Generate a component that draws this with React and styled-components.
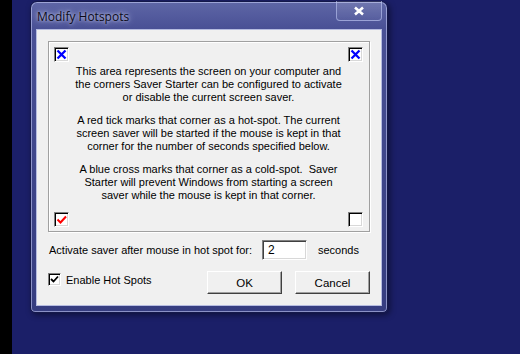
import styled, { createGlobalStyle } from "styled-components";

const Global = createGlobalStyle`
  *, *::before, *::after {
    box-sizing: border-box;
  }
  html, body {
    margin: 0;
    padding: 0;
    width: 520px;
    height: 354px;
    overflow: hidden;
  }
  body {
    font-family: "Liberation Sans", Arial, sans-serif;
  }
`;

function Check({ mark, size = 15 }) {
  return (
    <Box $size={size}>
      {mark === "cross" && (
        <svg width="11" height="11" viewBox="0 0 11 11">
          <path d="M1.5 1.5 L9.5 9.5 M9.5 1.5 L1.5 9.5" stroke="#0000ff" strokeWidth="2.3" />
        </svg>
      )}
      {mark === "tick" && (
        <svg width="11" height="11" viewBox="0 0 11 11">
          <path d="M1.5 5.5 L4.5 8.5 L10 2.5" stroke="#ff0000" strokeWidth="2" fill="none" />
        </svg>
      )}
      {mark === "black" && (
        <svg width="9" height="9" viewBox="0 0 9 9">
          <path d="M1 4 L3.5 6.5 L8 1.5" stroke="#000" strokeWidth="1.8" fill="none" />
        </svg>
      )}
    </Box>
  );
}

function App() {
  return (
    <>
      <Global />
      <Desktop>
        <Strip />
        <Screen>
          <Window>
            <TitleBar>
              <Title>Modify Hotspots</Title>
              <CloseBtn>
                <svg width="12" height="10" viewBox="0 0 12 10">
                  <path d="M2 1.5 L10 8.5 M10 1.5 L2 8.5" stroke="#fff" strokeWidth="2.6" />
                </svg>
              </CloseBtn>
            </TitleBar>
            <Client>
              <Group>
                <CornerRow>
                  <Check mark="cross" />
                  <Check mark="cross" />
                </CornerRow>
                <Text>
                  <p>
                    This area represents the screen on your computer and
                    <br />
                    the corners Saver Starter can be configured to activate
                    <br />
                    or disable the current screen saver.
                  </p>
                  <p>
                    A red tick marks that corner as a hot-spot. The current
                    <br />
                    screen saver will be started if the mouse is kept in that
                    <br />
                    corner for the number of seconds specified below.
                  </p>
                  <p>
                    A blue cross marks that corner as a cold-spot.&nbsp; Saver
                    <br />
                    Starter will prevent Windows from starting a screen
                    <br />
                    saver while the mouse is kept in that corner.
                  </p>
                </Text>
                <CornerRow>
                  <Check mark="tick" />
                  <Check />
                </CornerRow>
              </Group>
              <DelayRow>
                <span>Activate saver after mouse in hot spot for:</span>
                <Field>2</Field>
                <Unit>seconds</Unit>
              </DelayRow>
              <BottomRow>
                <Enable>
                  <Check mark="black" size={13} />
                  <span>Enable Hot Spots</span>
                </Enable>
                <Buttons>
                  <Button>OK</Button>
                  <Button>Cancel</Button>
                </Buttons>
              </BottomRow>
            </Client>
          </Window>
        </Screen>
      </Desktop>
    </>
  );
}

export default App;

const Desktop = styled.div`
  display: flex;
  width: 520px;
  height: 354px;
`;

const Strip = styled.div`
  width: 12px;
  background: #000;
`;

const Screen = styled.div`
  position: relative;
  flex: 1;
  background: #1b1f68;
`;

const Window = styled.div`
  position: absolute;
  left: 18px;
  top: 1px;
  width: 358px;
  height: 312px;
  border: 1px solid #14184a;
  border-radius: 7px 7px 5px 5px;
  background: linear-gradient(180deg, #5e66a6 0px, #4a5196 26px, #3d4488 60%, #363d80 100%);
  box-shadow: inset 0 0 0 1px rgba(210, 215, 255, 0.55), 2px 2px 6px rgba(0, 0, 0, 0.45);
  display: flex;
  flex-direction: column;
  padding: 0 5px 6px 5px;
`;

const TitleBar = styled.div`
  position: relative;
  height: 27px;
  flex: none;
  display: flex;
  align-items: center;
`;

const Title = styled.div`
  font-family: "Open Sans", "Noto Sans", sans-serif;
  font-size: 12px;
  color: #0c0a18;
  padding-left: 1px;
  margin-top: 2px;
  text-shadow: 0 0 6px rgba(220, 225, 255, 0.9), 0 0 3px rgba(220, 225, 255, 0.7);
`;

const CloseBtn = styled.div`
  position: absolute;
  right: 0;
  top: -1px;
  width: 46px;
  height: 20px;
  border: 1px solid rgba(190, 200, 245, 0.6);
  border-top: none;
  border-radius: 0 0 4px 4px;
  background: linear-gradient(180deg, rgba(255, 255, 255, 0.12), rgba(255, 255, 255, 0.04));
  display: flex;
  align-items: center;
  justify-content: center;
`;

const Client = styled.div`
  flex: 1;
  background: #f0f0f0;
  border: 1px solid #b6bce0;
  padding: 11px 11px 0 11px;
  font-size: 11px;
  color: #000;
`;

const Group = styled.div`
  height: 191px;
  border: 1px solid #a0a0a0;
  box-shadow: inset 1px 1px 0 #fff, 1px 1px 0 #fff;
  padding: 5px 6px 6px 5px;
  display: flex;
  flex-direction: column;
`;

const CornerRow = styled.div`
  display: flex;
  justify-content: space-between;
`;

const Text = styled.div`
  flex: 1;
  text-align: center;
  line-height: 13px;
  padding-top: 3px;

  p {
    margin: 0 0 10px 0;
  }
`;

const Box = styled.div`
  width: ${(p) => p.$size}px;
  height: ${(p) => p.$size}px;
  background: #fff;
  border: 1px solid;
  border-color: #808080 #fff #fff #808080;
  box-shadow: inset 1px 1px 0 #000, inset -1px -1px 0 #d8d8d8;
  display: flex;
  align-items: center;
  justify-content: center;
`;

const DelayRow = styled.div`
  display: flex;
  align-items: center;
  margin-top: 8px;
  padding-left: 1px;
`;

const Unit = styled.span`
  margin-left: 11px;
`;

const Field = styled.div`
  width: 45px;
  height: 20px;
  margin-left: 10px;
  background: #fff;
  border: 1px solid;
  border-color: #808080 #fff #fff #808080;
  box-shadow: inset 1px 1px 0 #404040, inset -1px -1px 0 #d8d8d8;
  padding: 1px 0 0 5px;
  line-height: 16px;
  font-size: 12px;
`;

const BottomRow = styled.div`
  display: flex;
  justify-content: space-between;
  align-items: center;
  margin-top: 11px;
`;

const Enable = styled.div`
  display: flex;
  align-items: center;
  gap: 5px;
  margin-top: -6px;
  font-size: 11px;
`;

const Buttons = styled.div`
  display: flex;
  gap: 13px;
`;

const Button = styled.div`
  width: 75px;
  height: 23px;
  border: 1px solid;
  border-color: #fff #404040 #404040 #fff;
  box-shadow: inset -1px -1px 0 #a0a0a0;
  background: #f0f0f0;
  display: flex;
  align-items: center;
  justify-content: center;
  font-size: 11.5px;
`;
